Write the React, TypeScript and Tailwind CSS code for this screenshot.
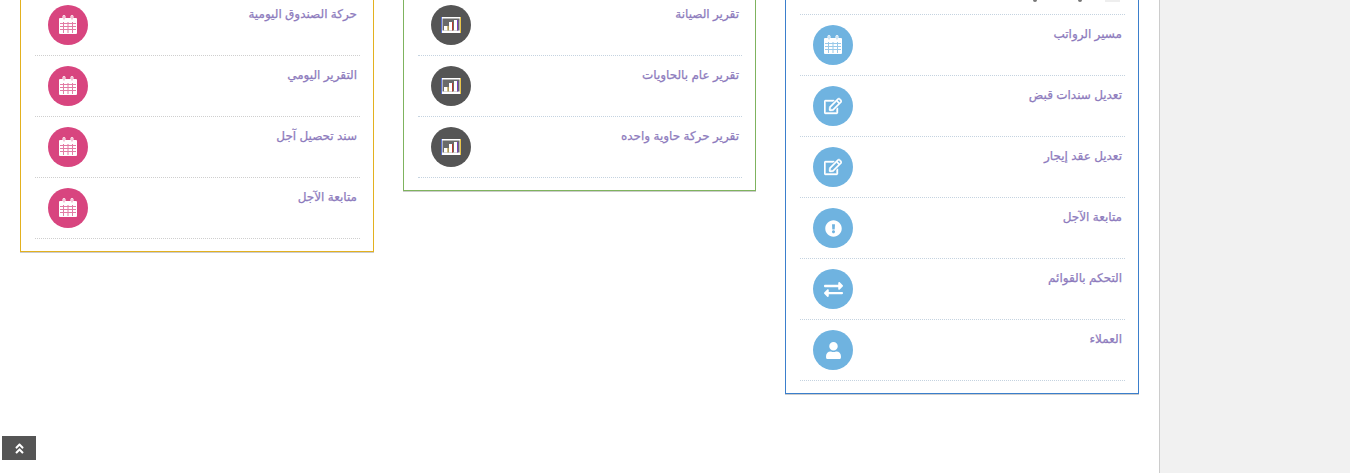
import { FaRegEdit, FaExclamationCircle, FaExchangeAlt, FaUser, FaAngleDoubleUp } from "react-icons/fa";

function CalendarIcon() {
  return (
    <svg viewBox="0 0 18 19" className="-mt-px w-[18px] h-[19px]" fill="none">
      <path d="M1 3h16a1 1 0 0 1 1 1v14a1 1 0 0 1-1 1H1a1 1 0 0 1-1-1V4a1 1 0 0 1 1-1z" fill="#fff" />
      <rect x="3.500" y="0" width="3" height="6" rx="1.500" fill="#fff" />
      <rect x="11.500" y="0" width="3" height="6" rx="1.500" fill="#fff" />
      <rect x="4.500" y="1" width="1" height="3.500" fill="currentColor" opacity="0.6" />
      <rect x="12.500" y="1" width="1" height="3.500" fill="currentColor" opacity="0.6" />
      <g fill="currentColor" opacity="0.7">
        <rect x="1" y="8" width="16" height="1" />
        <rect x="1" y="11" width="16" height="1" />
        <rect x="1" y="14" width="16" height="1" />
        <rect x="4" y="7" width="1" height="11" />
        <rect x="8.500" y="7" width="1" height="11" />
        <rect x="13" y="7" width="1" height="11" />
      </g>
    </svg>
  );
}

function ChartIcon() {
  return (
    <svg viewBox="0 0 20 16" className="-mt-px w-5 h-4">
      <rect x="0" y="0" width="20" height="16" fill="#fff" />
      <rect x="0" y="0" width="1" height="16" fill="#5a6fd0" />
      <rect x="19" y="0" width="1" height="16" fill="#e8c34a" />
      <rect x="1.500" y="1.500" width="17" height="12" fill="#6a6a6a" />
      <rect x="3" y="9" width="3.500" height="4.500" fill="#fff" />
      <rect x="6.500" y="9" width="1" height="4.500" fill="#e8c34a" />
      <rect x="8" y="5" width="3" height="8.500" fill="#fff" />
      <rect x="11" y="5" width="1" height="8.500" fill="#c0392b" />
      <rect x="13" y="3" width="3" height="10.500" fill="#fff" />
      <rect x="16" y="3" width="1" height="10.500" fill="#7a3fc0" />
    </svg>
  );
}

type Row = { label: string; icon: React.ReactNode };

function Panel({ rows, width, border, circle, mt, lineColor, cutRow }: { rows: Row[]; width: string; border: string; circle: string; mt: string; lineColor: string; cutRow?: boolean }) {
  return (
    <div className={`${width} ${border} ${mt} shrink-0 border-x border-b bg-white pl-[14px] pr-[13px] pb-[12px] shadow-[0_1px_0_#ccc]`}>
      {/* row cut off by the scroll, only the bottoms of its letters show */}
      {cutRow && (
        <div dir="rtl" className={`flex h-[61px] items-end border-b border-dotted ${lineColor} pr-[5px] pb-[12px]`}>
          <span className="h-[2px] w-[15px] bg-[#eeeeee]" />
          <span className="mr-[23px] h-[2px] w-[4px] rounded-b-full bg-[#777777]" />
          <span className="mr-[41px] h-[2px] w-[4px] rounded-b-full bg-[#777777]" />
        </div>
      )}
      {rows.map((r, i) => (
        <div key={i} dir="rtl" className={`flex h-[61px] items-start justify-between border-b border-dotted ${lineColor} pr-[3px] pl-[13px] pt-[10px]`}>
          <span className="-mt-[1px] text-[12px] leading-[20px] font-normal text-[#8d7bbd] [-webkit-text-stroke:0.25px_#8d7bbd]">{r.label}</span>
          <span className={`${circle} flex size-10 items-center justify-center rounded-full text-white`}>{r.icon}</span>
        </div>
      ))}
    </div>
  );
}

const cal = <CalendarIcon />;
const chart = <ChartIcon />;

const leftRows: Row[] = [
  { label: "حركة الصندوق اليومية", icon: <span className="text-[#d8457f]">{cal}</span> },
  { label: "التقرير اليومي", icon: <span className="text-[#d8457f]">{cal}</span> },
  { label: "سند تحصيل آجل", icon: <span className="text-[#d8457f]">{cal}</span> },
  { label: "متابعة الآجل", icon: <span className="text-[#d8457f]">{cal}</span> },
];

const midRows: Row[] = [
  { label: "تقرير الصيانة", icon: chart },
  { label: "تقرير عام بالحاويات", icon: chart },
  { label: "تقرير حركة حاوية واحده", icon: chart },
];

const rightRows: Row[] = [
  { label: "مسير الرواتب", icon: <span className="text-[#6fb3e0]">{cal}</span> },
  { label: "تعديل سندات قبض", icon: <FaRegEdit className="text-[18px] stroke-[12]" /> },
  { label: "تعديل عقد إيجار", icon: <FaRegEdit className="text-[18px] stroke-[12]" /> },
  { label: "متابعة الآجل", icon: <FaExclamationCircle className="text-[17px]" /> },
  { label: "التحكم بالقوائم", icon: <FaExchangeAlt className="text-[19px]" /> },
  { label: "العملاء", icon: <FaUser className="text-[17px]" /> },
];

export default function App() {
  return (
    <div className="relative flex h-[473px] w-full overflow-hidden bg-white font-['Liberation_Sans','DejaVu_Sans',sans-serif]">
      <main className="flex flex-1 items-start gap-[29px] pl-5">
        <Panel rows={leftRows} width="w-[354px]" border="border-[#e3b11f]" circle="bg-[#d8457f]" mt="-mt-[5px]" lineColor="border-[#cfcfcf]" />
        <Panel rows={midRows} width="w-[353px]" border="border-[#7fb35e]" circle="bg-[#555555]" mt="-mt-[5px]" lineColor="border-[#c5d3e0]" />
        <Panel rows={rightRows} width="w-[354px]" border="border-[#3b7fcc]" circle="bg-[#6fb3e0]" mt="-mt-[46px]" lineColor="border-[#c5d3e0]" cutRow />
      </main>
      <aside className="w-[191px] shrink-0 border-l border-[#cccccc] bg-[#f1f1f1]" />
      <button className="absolute bottom-[13px] left-[2px] flex h-6 w-[34px] items-center justify-center bg-[#555555] text-white">
        <FaAngleDoubleUp className="text-[13px]" />
      </button>
    </div>
  );
}
